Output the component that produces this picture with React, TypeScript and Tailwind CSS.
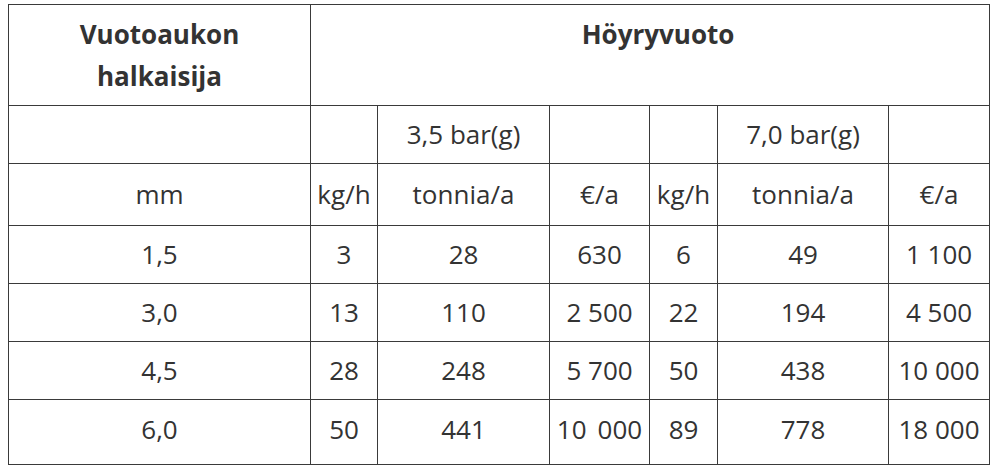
const rows = [
  ['1,5', '3', '28', '630', '6', '49', '1 100'],
  ['3,0', '13', '110', '2 500', '22', '194', '4 500'],
  ['4,5', '28', '248', '5 700', '50', '438', '10 000'],
  ['6,0', '50', '441', '10 \u2009000', '89', '778', '18 000'],
];

const cell = 'border border-[#3a3a3a] text-center align-middle p-0 whitespace-pre';

export default function App() {
  return (
    <div className="bg-white min-h-[471px] pl-[8px] pt-[4px] text-[#333333] font-['Open_Sans',sans-serif] text-[26px]">
      <table className="table-fixed border-collapse w-[981px]">
        <colgroup>
          <col className="w-[302px]" />
          <col className="w-[67px]" />
          <col className="w-[172px]" />
          <col className="w-[100px]" />
          <col className="w-[68px]" />
          <col className="w-[171px]" />
          <col className="w-[101px]" />
        </colgroup>
        <thead>
          <tr className="h-[101px]">
            <th className="border border-[#3a3a3a] text-center align-top pt-[8px] font-bold leading-[42px]">
              Vuotoaukon
              <br />
              halkaisija
            </th>
            <th colSpan={6} className="border border-[#3a3a3a] text-center align-top pt-[8px] pl-[16px] font-bold leading-[42px]">
              Höyryvuoto
            </th>
          </tr>
        </thead>
        <tbody>
          <tr className="h-[58px]">
            <td className={cell}></td>
            <td className={cell}></td>
            <td className={cell}>3,5 bar(g)</td>
            <td className={cell}></td>
            <td className={cell}></td>
            <td className={cell}>7,0 bar(g)</td>
            <td className={cell}></td>
          </tr>
          <tr className="h-[62px]">
            <td className={cell}>mm</td>
            <td className={cell}>kg/h</td>
            <td className={cell}>tonnia/a</td>
            <td className={cell}>€/a</td>
            <td className={cell}>kg/h</td>
            <td className={cell}>tonnia/a</td>
            <td className={cell}>€/a</td>
          </tr>
          {rows.map((r, i) => (
            <tr key={i} className={i === 3 ? 'h-[65px]' : 'h-[58px]'}>
              {r.map((v, j) => (
                <td key={j} className={i === 3 ? cell + ' pb-[6px]' : cell}>
                  {v}
                </td>
              ))}
            </tr>
          ))}
        </tbody>
      </table>
    </div>
  );
}
